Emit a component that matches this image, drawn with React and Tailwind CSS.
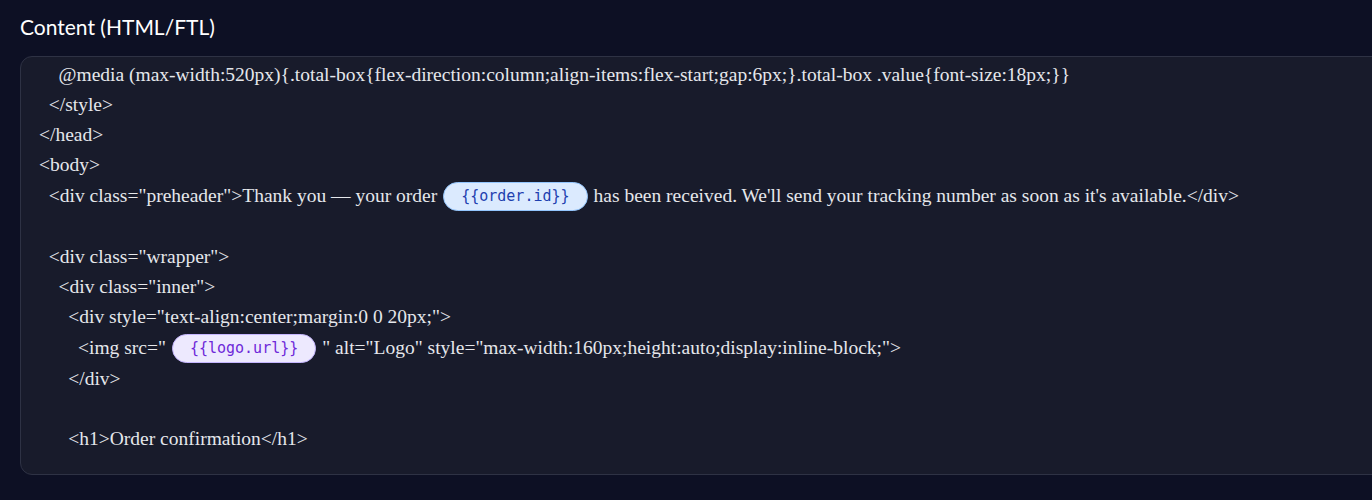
import React from 'react'

function Pill({ tone, children }) {
  const cls =
    tone === 'purple'
      ? 'bg-[#ede9fe] border-[#c4b5fd] text-[#6d28d9]'
      : 'bg-[#dbeafe] border-[#93c5fd] text-[#1e40af]'
  return (
    <span
      className={`inline-flex items-center h-[29px] px-[17px] mx-[6px] rounded-full border align-middle text-[15px] font-['DejaVu_Sans_Mono','Liberation_Mono',monospace] ${cls}`}
    >
      {children}
    </span>
  )
}

function Line({ tall, children }) {
  return (
    <div className={`${tall ? 'h-[32px]' : 'h-[30px]'} flex items-center whitespace-pre`}>
      {children}
    </div>
  )
}

export default function App() {
  return (
    <div className="w-[1372px] h-[500px] bg-[#0d1024] overflow-hidden">
      <div className="pl-[20px] pt-[13px]">
        <h2 className="text-[21px] leading-[28px] text-white font-['Lato','Inter',sans-serif]">
          Content (HTML/FTL)
        </h2>
      </div>
      <div className="mt-[15px] ml-[20px] w-[1380px] h-[419px] rounded-[12px] border border-[#2e3244] bg-[#181b2b] overflow-hidden">
        <div className="pt-[3px] pl-[18px] text-[19.5px] text-[#e5e7eb] font-['Liberation_Serif','Times_New_Roman',serif]">
          <Line>{'    @media (max-width:520px){.total-box{flex-direction:column;align-items:flex-start;gap:6px;}.total-box .value{font-size:18px;}}'}</Line>
          <Line>{'  </style>'}</Line>
          <Line>{'</head>'}</Line>
          <Line>{'<body>'}</Line>
          <Line tall>
            {'  <div class="preheader">Thank you — your order'}
            <Pill>{'{{order.id}}'}</Pill>
            {"has been received. We'll send your tracking number as soon as it's available.</div>"}
          </Line>
          <Line>{' '}</Line>
          <Line>{'  <div class="wrapper">'}</Line>
          <Line>{'    <div class="inner">'}</Line>
          <Line>{'      <div style="text-align:center;margin:0 0 20px;">'}</Line>
          <Line tall>
            {'        <img src="'}
            <Pill tone="purple">{'{{logo.url}}'}</Pill>
            {'" alt="Logo" style="max-width:160px;height:auto;display:inline-block;">'}
          </Line>
          <Line>{'      </div>'}</Line>
          <Line>{' '}</Line>
          <Line>{'      <h1>Order confirmation</h1>'}</Line>
        </div>
      </div>
    </div>
  )
}
